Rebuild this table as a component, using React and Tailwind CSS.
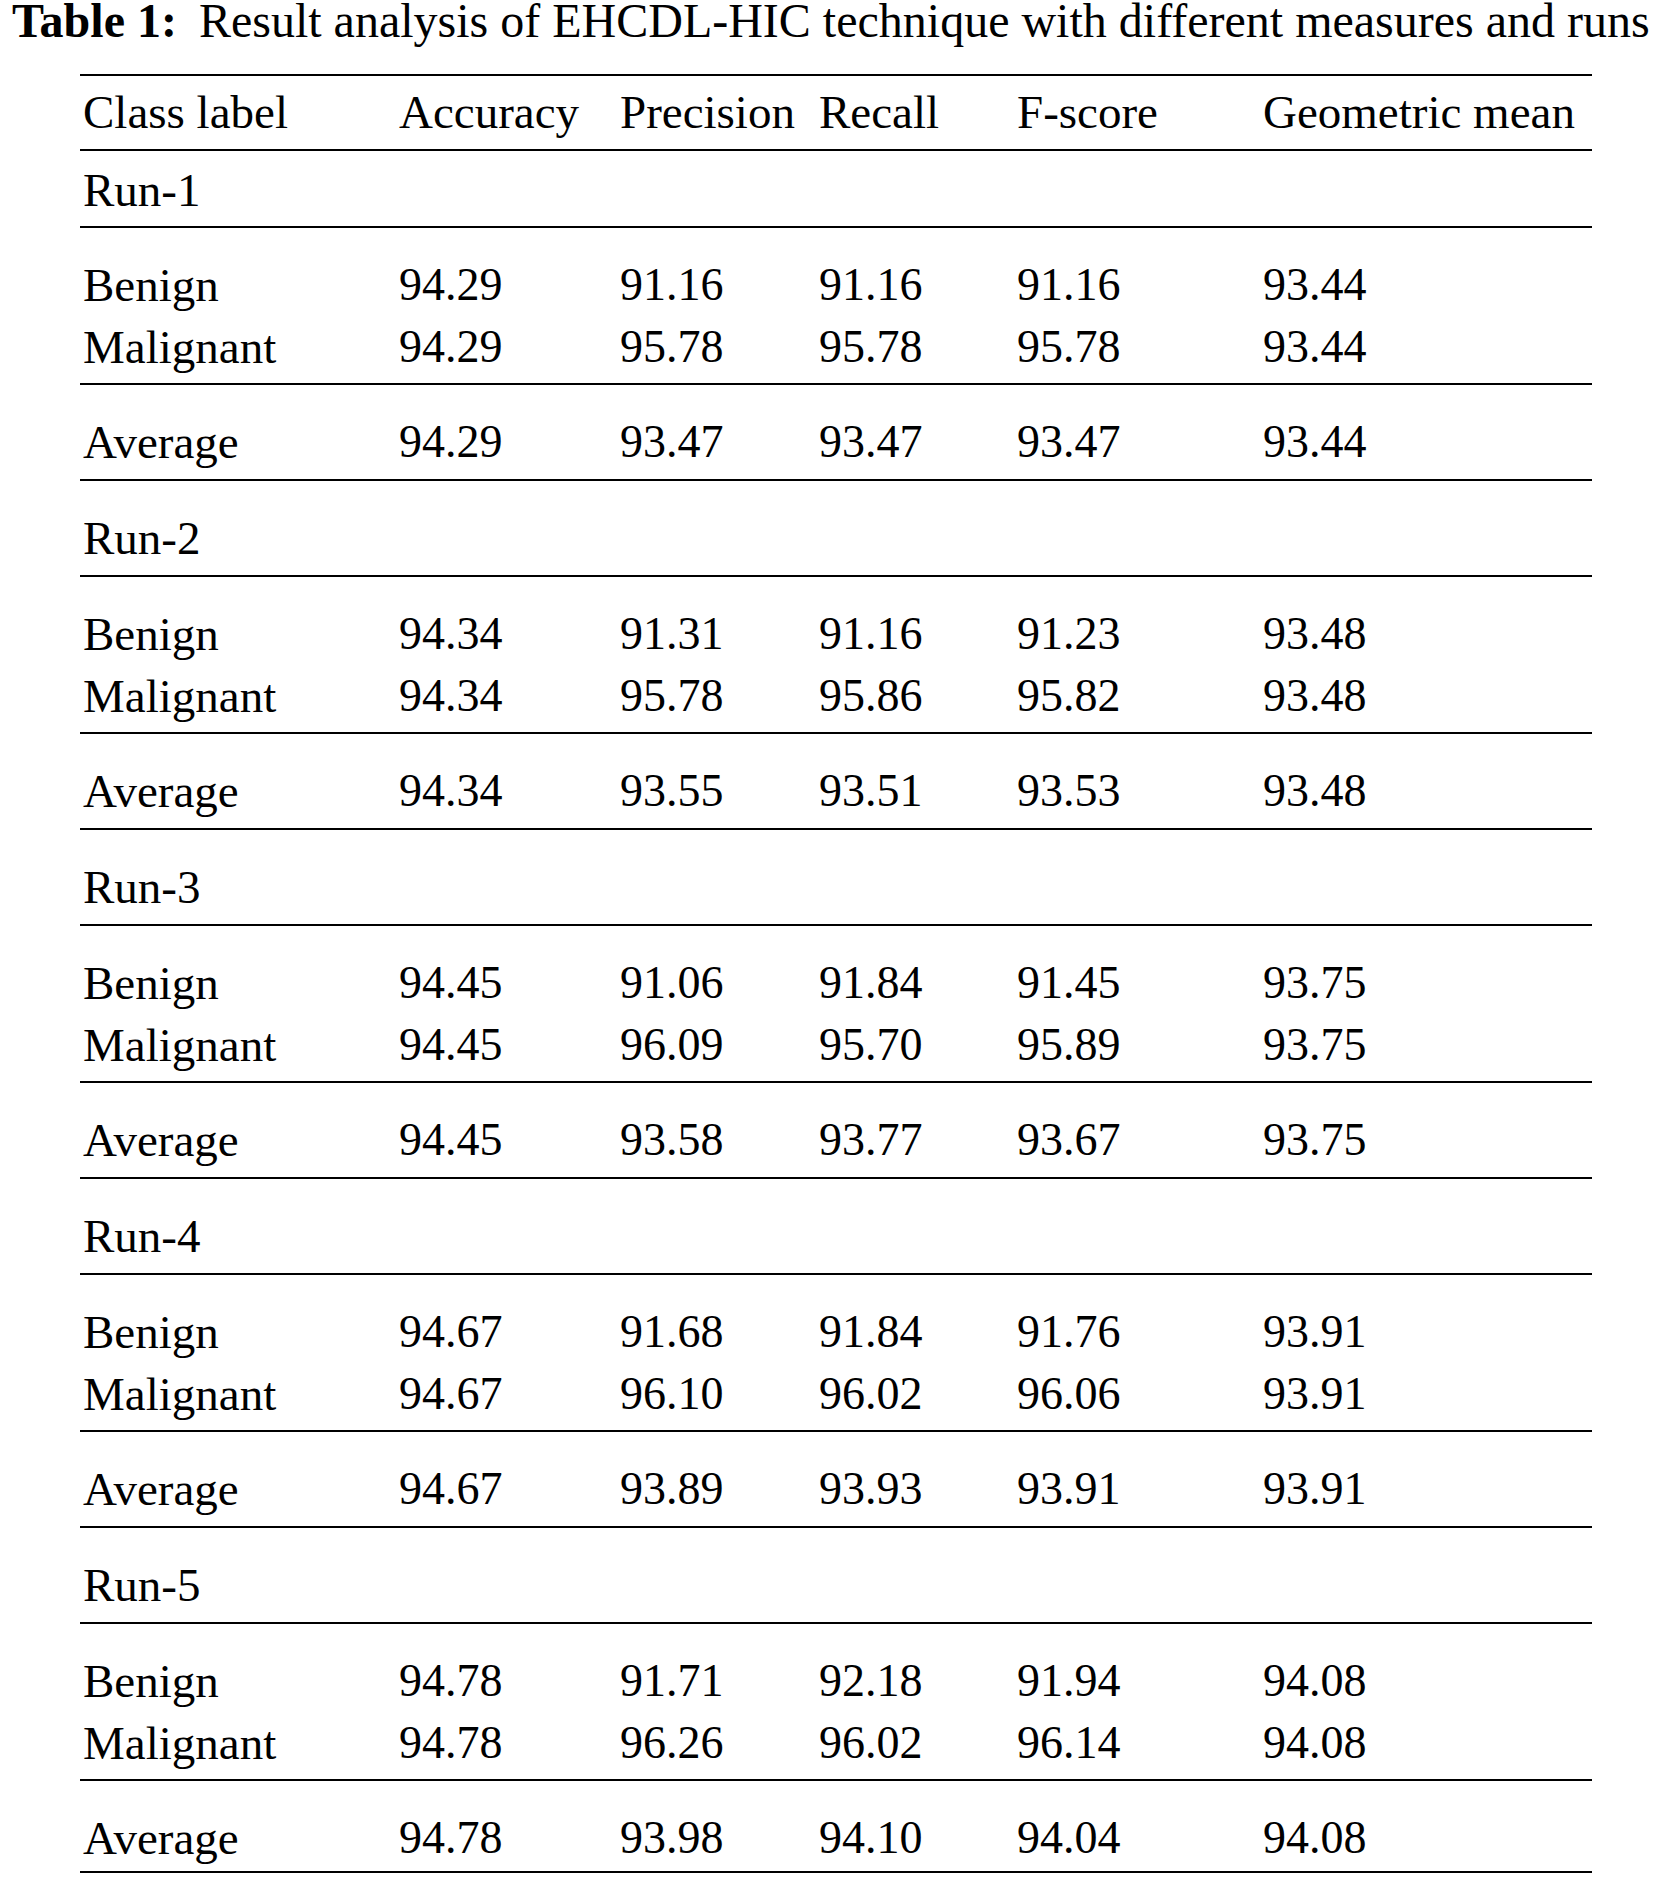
const runs = [
  {
    label: 'Run-1',
    head: 'h-[77px] pt-[8px]',
    benign: ['94.29', '91.16', '91.16', '91.16', '93.44'],
    malignant: ['94.29', '95.78', '95.78', '95.78', '93.44'],
    average: ['94.29', '93.47', '93.47', '93.47', '93.44'],
  },
  {
    label: 'Run-2',
    benign: ['94.34', '91.31', '91.16', '91.23', '93.48'],
    malignant: ['94.34', '95.78', '95.86', '95.82', '93.48'],
    average: ['94.34', '93.55', '93.51', '93.53', '93.48'],
  },
  {
    label: 'Run-3',
    benign: ['94.45', '91.06', '91.84', '91.45', '93.75'],
    malignant: ['94.45', '96.09', '95.70', '95.89', '93.75'],
    average: ['94.45', '93.58', '93.77', '93.67', '93.75'],
  },
  {
    label: 'Run-4',
    benign: ['94.67', '91.68', '91.84', '91.76', '93.91'],
    malignant: ['94.67', '96.10', '96.02', '96.06', '93.91'],
    average: ['94.67', '93.89', '93.93', '93.91', '93.91'],
  },
  {
    label: 'Run-5',
    benign: ['94.78', '91.71', '92.18', '91.94', '94.08'],
    malignant: ['94.78', '96.26', '96.02', '96.14', '94.08'],
    average: ['94.78', '93.98', '94.10', '94.04', '94.08'],
    last: true,
  },
]

const cols = 'grid grid-cols-[316px_221px_199px_198px_246px_1fr] pl-[3px]'

// words in the source font run a little wider than the digits
const Line = ({ label, values }) => (
  <div className={`${cols} leading-[62px]`}>
    <div className="text-[47px]">{label}</div>
    {values.map((v, i) => (
      <div key={i}>{v}</div>
    ))}
  </div>
)

const Run = ({ run }) => (
  <>
    <div className={`border-b-2 border-black pl-[3px] text-[47px] leading-[62px] ${run.head || 'h-[96px] pt-[26px]'}`}>
      {run.label}
    </div>
    <div className="h-[157px] border-b-2 border-black pt-[26px]">
      <Line label="Benign" values={run.benign} />
      <Line label="Malignant" values={run.malignant} />
    </div>
    <div className={`border-b-2 border-black pt-[26px] ${run.last ? 'h-[92px]' : 'h-[96px]'}`}>
      <Line label="Average" values={run.average} />
    </div>
  </>
)

export default function App() {
  return (
    <div className="w-[1658px] h-[1879px] bg-white text-black text-[46px] font-['Liberation_Serif',serif] overflow-hidden">
      <div className="h-[74px] pl-[12px] pt-[1px] text-[48px] leading-[40px] whitespace-nowrap">
        <span className="font-bold">Table 1:</span>
        <span className="ml-[22px]">Result analysis of EHCDL-HIC technique with different measures and runs</span>
      </div>

      <div className="ml-[80px] w-[1512px] border-t-2 border-black">
        <div className={`${cols} h-[75px] border-b-2 border-black pt-[5px] text-[47px] leading-[62px]`}>
          <div>Class label</div>
          <div>Accuracy</div>
          <div>Precision</div>
          <div>Recall</div>
          <div>F-score</div>
          <div>Geometric mean</div>
        </div>
        {runs.map((run) => (
          <Run key={run.label} run={run} />
        ))}
      </div>
    </div>
  )
}
